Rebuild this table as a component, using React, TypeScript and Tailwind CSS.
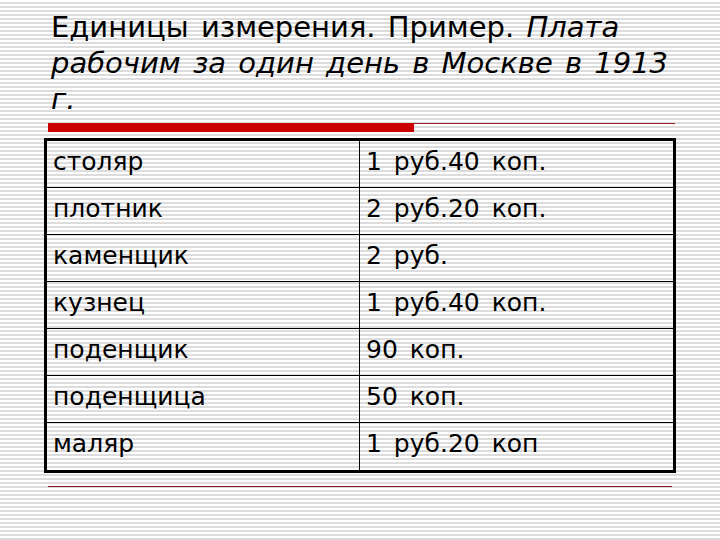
import React from "react";

const rows: [string, string][] = [
  ["столяр", "1 руб.40 коп."],
  ["плотник", "2 руб.20 коп."],
  ["каменщик", "2 руб."],
  ["кузнец", "1 руб.40 коп."],
  ["поденщик", "90 коп."],
  ["поденщица", "50 коп."],
  ["маляр", "1 руб.20 коп"],
];

const App = () => {
  return (
    <div className="w-[720px] h-[540px] overflow-hidden bg-[repeating-linear-gradient(to_bottom,#ffffff_0px,#ffffff_2px,#dcdcdc_2px,#dcdcdc_4px)] font-['DejaVu_Sans',sans-serif] text-black">
      {/* Title */}
      <div className="pl-[51px] pt-[9px] pr-[40px] text-[29px] leading-[36px] [word-spacing:3px]">
        Единицы измерения. Пример. <i>Плата рабочим за один день в Москве в 1913 г.</i>
      </div>

      {/* Red rule */}
      <div className="flex ml-[48px] w-[627px] mt-[6px]">
        <div className="w-[366px] h-[9px] bg-[#cc0000]" />
        <div className="flex-1 border-t border-[#9b1c1c]" />
      </div>

      {/* Table */}
      <div className="ml-[44px] mt-[6px] w-[632px] border-[3px] border-black divide-y divide-black text-[25px] [word-spacing:4px]">
        {rows.map(([job, pay]) => (
          <div key={job} className="flex h-[47px]">
            <div className="w-[313px] border-r border-black pl-[6px] pt-[2px]">{job}</div>
            <div className="flex-1 pl-[6px] pt-[2px]">{pay}</div>
          </div>
        ))}
      </div>

      {/* Bottom rule */}
      <div className="ml-[48px] w-[624px] mt-[13px] border-t border-[#8b1a1a]" />
    </div>
  );
};

export default App;
